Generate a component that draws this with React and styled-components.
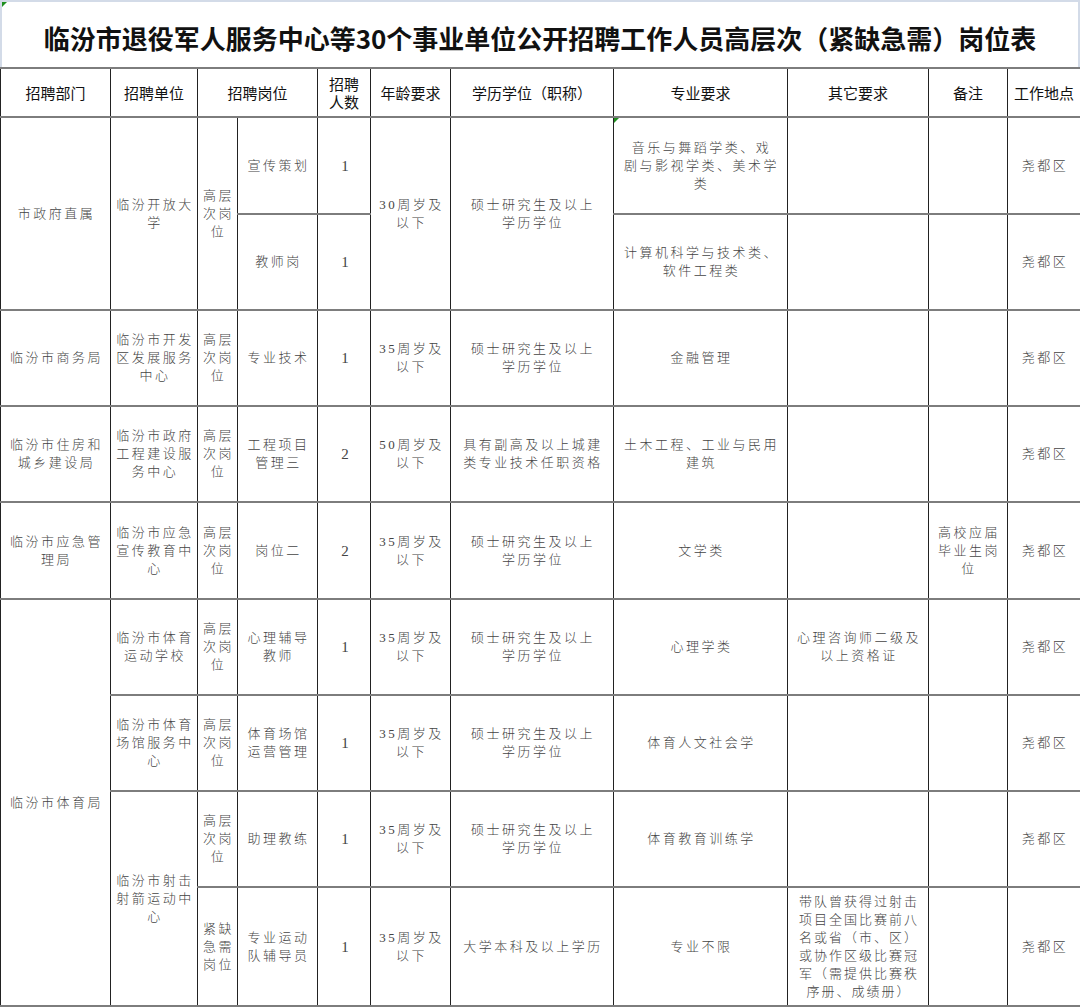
import React from 'react';
import styled, { createGlobalStyle } from 'styled-components';

const GlobalStyle = createGlobalStyle`
  html, body { margin: 0; padding: 0; background: #fff; }
  body { font-family: "Noto Sans CJK SC", sans-serif; }
`;

const Sheet = styled.div`
  width: 1080px;
  height: 1007px;
  background: #fff;
  overflow: hidden;
`;

const TitleBar = styled.div`
  position: relative;
  box-sizing: border-box;
  height: 67px;
  padding-top: 6px;
  border-top: 2px solid #d3dbe8;
  border-left: 2px solid #d3dbe8;
  border-right: 2px solid #d3dbe8;
  display: flex;
  align-items: center;
  justify-content: center;
  font: 700 26px/1 "Noto Sans CJK SC", sans-serif;
  color: #111;
`;

const Flag = styled.span`
  position: absolute;
  top: 0;
  left: 0;
  width: 0;
  height: 0;
  border-top: 5px solid #1f8f1f;
  border-right: 5px solid transparent;
`;

const Grid = styled.table`
  width: 1080px;
  border-collapse: collapse;
  table-layout: fixed;
`;

const Col = styled.col`
  width: ${p => p.$w}px;
`;

const Row = styled.tr`
  height: ${p => p.$h}px;
`;

const Head = styled.th`
  border-left: 1px solid #222;
  border-right: 1px solid #222;
  border-top: 2px solid #7d7d7d;
  border-bottom: 2px solid #7d7d7d;
  padding: 0;
  white-space: pre-line;
  text-align: center;
  vertical-align: middle;
  font: 400 15px/18px "Noto Sans CJK SC", sans-serif;
  color: #111;
`;

const Cell = styled.td`
  position: relative;
  border-left: 1px solid #222;
  border-right: 1px solid #222;
  border-top: 2px solid #7d7d7d;
  border-bottom: 2px solid #7d7d7d;
  padding: 0 0 0 2px;
  white-space: pre-line;
  text-align: center;
  vertical-align: middle;
  font: 300 13px/18px "Liberation Serif", "Noto Sans CJK SC", serif;
  letter-spacing: ${p => (p.$tight ? 2 : 2.5)}px;
  color: #444;
`;

const Num = styled(Cell)`
  font-size: 15px;
  letter-spacing: 0;
`;

const GAO = '高层\n次岗\n位';
const MASTER = '硕士研究生及以上\n学历学位';
const AREA = '尧都区';

const App = () => (
  <Sheet>
    <GlobalStyle />
    <TitleBar>
      <Flag />
      临汾市退役军人服务中心等30个事业单位公开招聘工作人员高层次（紧缺急需）岗位表
    </TitleBar>
    <Grid>
      <colgroup>
        <Col $w={110} />
        <Col $w={87} />
        <Col $w={40} />
        <Col $w={80} />
        <Col $w={53} />
        <Col $w={80} />
        <Col $w={163} />
        <Col $w={174} />
        <Col $w={141} />
        <Col $w={79} />
        <Col $w={73} />
      </colgroup>
      <tbody>
        <Row $h={49}>
          <Head>招聘部门</Head>
          <Head>招聘单位</Head>
          <Head colSpan={2}>招聘岗位</Head>
          <Head>{'招聘\n人数'}</Head>
          <Head>年龄要求</Head>
          <Head>学历学位（职称）</Head>
          <Head>专业要求</Head>
          <Head>其它要求</Head>
          <Head>备注</Head>
          <Head>工作地点</Head>
        </Row>

        <Row $h={97}>
          <Cell rowSpan={2}>市政府直属</Cell>
          <Cell rowSpan={2}>{'临汾开放大\n学'}</Cell>
          <Cell rowSpan={2}>{GAO}</Cell>
          <Cell>宣传策划</Cell>
          <Num>1</Num>
          <Cell rowSpan={2}>{'30周岁及\n以下'}</Cell>
          <Cell rowSpan={2}>{MASTER}</Cell>
          <Cell>
            <Flag />
            {'音乐与舞蹈学类、戏\n剧与影视学类、美术学\n类'}
          </Cell>
          <Cell />
          <Cell />
          <Cell>{AREA}</Cell>
        </Row>
        <Row $h={96}>
          <Cell>教师岗</Cell>
          <Num>1</Num>
          <Cell>{'计算机科学与技术类、\n软件工程类'}</Cell>
          <Cell />
          <Cell />
          <Cell>{AREA}</Cell>
        </Row>

        <Row $h={96}>
          <Cell>临汾市商务局</Cell>
          <Cell>{'临汾市开发\n区发展服务\n中心'}</Cell>
          <Cell>{GAO}</Cell>
          <Cell>专业技术</Cell>
          <Num>1</Num>
          <Cell>{'35周岁及\n以下'}</Cell>
          <Cell>{MASTER}</Cell>
          <Cell>金融管理</Cell>
          <Cell />
          <Cell />
          <Cell>{AREA}</Cell>
        </Row>

        <Row $h={96}>
          <Cell>{'临汾市住房和\n城乡建设局'}</Cell>
          <Cell>{'临汾市政府\n工程建设服\n务中心'}</Cell>
          <Cell>{GAO}</Cell>
          <Cell>{'工程项目\n管理三'}</Cell>
          <Num>2</Num>
          <Cell>{'50周岁及\n以下'}</Cell>
          <Cell>{'具有副高及以上城建\n类专业技术任职资格'}</Cell>
          <Cell>{'土木工程、工业与民用\n建筑'}</Cell>
          <Cell />
          <Cell />
          <Cell>{AREA}</Cell>
        </Row>

        <Row $h={97}>
          <Cell>{'临汾市应急管\n理局'}</Cell>
          <Cell>{'临汾市应急\n宣传教育中\n心'}</Cell>
          <Cell>{GAO}</Cell>
          <Cell>岗位二</Cell>
          <Num>2</Num>
          <Cell>{'35周岁及\n以下'}</Cell>
          <Cell>{MASTER}</Cell>
          <Cell>文学类</Cell>
          <Cell />
          <Cell>{'高校应届\n毕业生岗\n位'}</Cell>
          <Cell>{AREA}</Cell>
        </Row>

        <Row $h={96}>
          <Cell rowSpan={4}>临汾市体育局</Cell>
          <Cell>{'临汾市体育\n运动学校'}</Cell>
          <Cell>{GAO}</Cell>
          <Cell>{'心理辅导\n教师'}</Cell>
          <Num>1</Num>
          <Cell>{'35周岁及\n以下'}</Cell>
          <Cell>{MASTER}</Cell>
          <Cell>心理学类</Cell>
          <Cell>{'心理咨询师二级及\n以上资格证'}</Cell>
          <Cell />
          <Cell>{AREA}</Cell>
        </Row>
        <Row $h={96}>
          <Cell>{'临汾市体育\n场馆服务中\n心'}</Cell>
          <Cell>{GAO}</Cell>
          <Cell>{'体育场馆\n运营管理'}</Cell>
          <Num>1</Num>
          <Cell>{'35周岁及\n以下'}</Cell>
          <Cell>{MASTER}</Cell>
          <Cell>体育人文社会学</Cell>
          <Cell />
          <Cell />
          <Cell>{AREA}</Cell>
        </Row>
        <Row $h={96}>
          <Cell rowSpan={2}>{'临汾市射击\n射箭运动中\n心'}</Cell>
          <Cell>{GAO}</Cell>
          <Cell>助理教练</Cell>
          <Num>1</Num>
          <Cell>{'35周岁及\n以下'}</Cell>
          <Cell>{MASTER}</Cell>
          <Cell>体育教育训练学</Cell>
          <Cell />
          <Cell />
          <Cell>{AREA}</Cell>
        </Row>
        <Row $h={119}>
          <Cell>{'紧缺\n急需\n岗位'}</Cell>
          <Cell>{'专业运动\n队辅导员'}</Cell>
          <Num>1</Num>
          <Cell>{'35周岁及\n以下'}</Cell>
          <Cell>大学本科及以上学历</Cell>
          <Cell>专业不限</Cell>
          <Cell $tight>
            {'带队曾获得过射击\n项目全国比赛前八\n名或省（市、区）\n或协作区级比赛冠\n军（需提供比赛秩\n序册、成绩册）'}
          </Cell>
          <Cell />
          <Cell>{AREA}</Cell>
        </Row>
      </tbody>
    </Grid>
  </Sheet>
);

export default App;
